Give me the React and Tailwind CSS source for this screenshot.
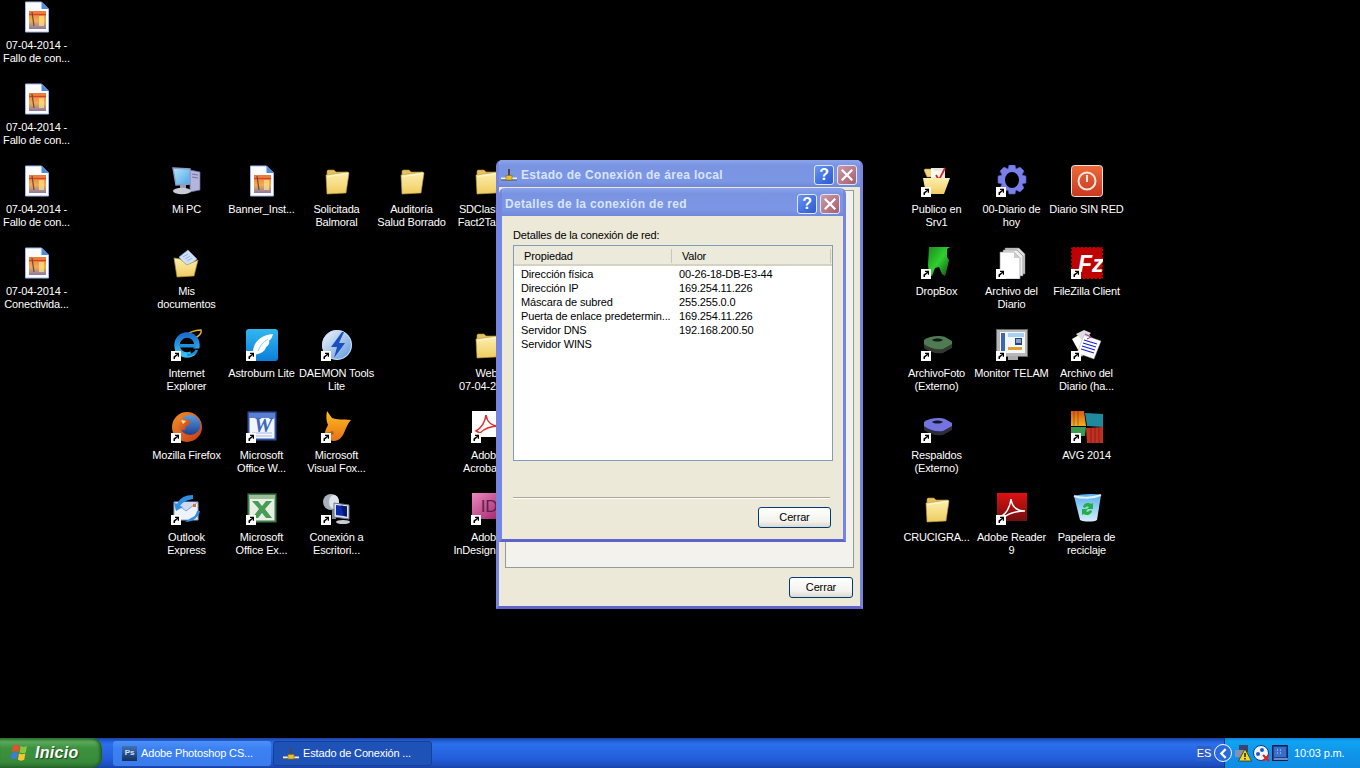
const tahoma = "font-['Liberation_Sans',Arial,sans-serif] tracking-[-0.15px]";

const Svg = ({ children }) => (
  <svg width="32" height="32" viewBox="0 0 32 32" className="block">
    {children}
  </svg>
);

const Shortcut = () => (
  <span className="absolute bottom-0 left-0 h-[10px] w-[10px] bg-white">
    <svg width="10" height="10" viewBox="0 0 10 10" className="block">
      <path d="M2.5 8V5.5L6 3H4V1.8h4v4H6.8V4L4 6.4V8z" fill="#000" />
    </svg>
  </span>
);

const ImageFile = () => (
  <Svg>
    <path d="M4.5 1h16l7 7v23h-23z" fill="#fdfdff" stroke="#9db8f0" />
    <path d="M20.5 1l7 7h-7z" fill="#4a8ae0" />
    <rect x="8" y="10" width="17" height="18" fill="url(#sunset)" />
    <path d="M8 13.500h17" stroke="#d8402a" strokeWidth="1.4" />
    <path d="M11 11l2 14" stroke="#6a4a3c" strokeWidth="1.2" />
    <path d="M18 15h5v10h-5z" fill="#f8e08a" opacity=".75" />
  </Svg>
);

const Folder = () => (
  <Svg>
    <path d="M6 8V6l1-1h6l2 2h11l1 1v3H6z" fill="#e6c05c" stroke="#b08f38" strokeWidth=".6" />
    <path d="M5 10l22-3 1 1-3 20-19 1z" fill="url(#folder)" stroke="#b89a48" strokeWidth=".6" />
    <path d="M6.500 11.500l19.500-2.800" stroke="#fff8d0" strokeWidth="1.200" />
  </Svg>
);

const MyPc = () => (
  <Svg>
    <path d="M19 5l10 2v18l-10 2z" fill="#b4b4dc" stroke="#6a6f96" strokeWidth=".7" />
    <path d="M21 9l6 1M21 12l6 1" stroke="#6f749c" />
    <path d="M2 3l17 1v15l-14 1z" fill="url(#screen)" stroke="#8e9ec9" strokeWidth="1.400" />
    <path d="M9 20h6v4H9z" fill="#9a9fb5" />
    <ellipse cx="11" cy="26" rx="9" ry="3.200" fill="#c9cbdb" />
  </Svg>
);

const MyDocs = () => (
  <Svg>
    <path d="M8 10l9-7 9 9-10 9z" fill="#cfe0fa" stroke="#7d9ad4" strokeWidth=".7" />
    <path d="M12 10l5-3M14 12l5-3M16 14l5-3" stroke="#8fb0e8" />
    <path d="M3 11l6 1 7 6 11-5-4 16L6 30z" fill="url(#folder)" stroke="#b08f38" strokeWidth=".7" />
  </Svg>
);

const Ie = () => (
  <Svg>
    <path d="M5 26C3 13 17 1 30 1c1 3-2 6-6 8" fill="none" stroke="#e0b030" strokeWidth="1.400" />
    <circle cx="16" cy="16" r="10" fill="none" stroke="url(#iee)" strokeWidth="5.500" />
    <path d="M9 15h16v3.500H9z" fill="#1f8fd8" />
    <path d="M19 19.500h10v4l-9 2z" fill="#000" />
    <path d="M16 26c4 0 8-1 10-5" fill="none" stroke="#1f8fd8" strokeWidth="2.600" />
  </Svg>
);

const Astroburn = () => (
  <Svg>
    <rect x="0" y="0" width="32" height="32" rx="3" fill="url(#astro)" />
    <path d="M7 26c-1-11 6-20 20-21-1 4-2 5-4 7 1 2-1 5-3 6-1 5-6 7-13 8z" fill="#fff" />
    <path d="M12 22c2-5 5-9 10-12" stroke="#7fd0f4" fill="none" />
  </Svg>
);

const Daemon = () => (
  <Svg>
    <circle cx="16" cy="16" r="15" fill="url(#daemon)" />
    <circle cx="16" cy="16" r="14.500" fill="none" stroke="#c8dcf6" />
    <path d="M21 3L10 18h6l-3 11 11-15h-6l5-11z" fill="#1b4fc0" />
  </Svg>
);

const Firefox = () => (
  <Svg>
    <circle cx="16" cy="16" r="15" fill="url(#fffox)" />
    <ellipse cx="19" cy="14" rx="10.500" ry="10" fill="url(#ffglobe)" />
    <path d="M8 5l5 3 5 1c2 3 0 6-3 6l-1 4c-3 1-6-1-7-4-1-4 0-7 1-10z" fill="url(#fffox)" />
    <path d="M10 9l5 1-3 3z" fill="#ffe1a0" />
  </Svg>
);

const Word = () => (
  <Svg>
    <rect x="2.500" y="1.500" width="27" height="27" fill="#f2f5fc" stroke="#2f4fa3" strokeWidth="2" />
    <rect x="3" y="2" width="26" height="5" fill="#5a7fd0" />
    <path d="M6 22h20M6 25h20" stroke="#a9b9de" />
    <text x="17" y="21" textAnchor="middle" fontFamily="Liberation Serif" fontWeight="700" fontStyle="italic" fontSize="21" fill="#3f67bd">W</text>
  </Svg>
);

const Fox = () => (
  <Svg>
    <path d="M6 0l5 7c5 2 11 1 19 2-3 3-5 8-7 13-2 4-5 8-10 8-6 0-9-4-9-8 0-3 2-6 3-8-2-4-2-9-1-14z" fill="url(#fox)" />
    <path d="M5 22l7-2 1 3-5 2z" fill="#a06818" />
  </Svg>
);

const Outlook = () => (
  <Svg>
    <path d="M3 9h24v18H3z" fill="#eef2fb" stroke="#8da0cf" />
    <path d="M3 9l12 9 12-9" fill="#cddaf3" stroke="#8da0cf" />
    <rect x="22" y="11" width="3" height="3" fill="#d87040" />
    <path d="M22 2C14 2 9 5 6 11l-3-1 2 8 7-4-3-1c3-4 7-6 13-7z" fill="#2f8fe4" />
    <path d="M29 18c-1 6-7 11-15 11l6-4c3-1 5-3 6-7z" fill="#2f8fe4" />
  </Svg>
);

const Excel = () => (
  <Svg>
    <rect x="2.500" y="1.500" width="27" height="27" fill="#e8f0e4" stroke="#3d7a48" strokeWidth="2" />
    <rect x="3" y="2" width="26" height="4" fill="#9abf98" />
    <path d="M6 8h6l4 5 4-5h6l-7 8 7 9h-6l-4-5-4 5H6l7-9z" fill="#4a9a58" />
  </Svg>
);

const Rdp = () => (
  <Svg>
    <ellipse cx="10" cy="9" rx="8" ry="8" fill="#a9b2bc" />
    <ellipse cx="13" cy="9" rx="5" ry="7" fill="#dfe5ea" />
    <path d="M11 16h4v10h-4z" fill="#7c8690" />
    <path d="M13 10l15 2v14l-15-2z" fill="#dfe3ea" stroke="#6d7786" />
    <path d="M15 12l11 1.500v10L15 22z" fill="#0a2bb0" />
    <path d="M20 12.500l6 1v10l-3-.5z" fill="#061868" />
    <ellipse cx="22" cy="29" rx="7" ry="2" fill="#c9ced6" />
  </Svg>
);

const Acrobat = () => (
  <Svg>
    <rect x="1" y="0" width="30" height="26" fill="#fff" />
    <path d="M5 20c5-3 9-9 10-16 1 7 6 11 13 11-7 0-14 2-19 7z" fill="none" stroke="#e03030" strokeWidth="1.600" />
  </Svg>
);

const InDesign = () => (
  <Svg>
    <rect x="1" y="0" width="30" height="26" fill="url(#indesign)" />
    <text x="18" y="19" textAnchor="middle" fontFamily="Liberation Sans" fontSize="17" fill="#5b2048">ID</text>
  </Svg>
);

const PublicFolder = () => (
  <Svg>
    <path d="M3 5l1-1h8l2 2h8v6H6z" fill="#f3d684" stroke="#b08f38" strokeWidth=".6" />
    <path d="M10 3h14v14H10z" fill="#fff" opacity=".9" />
    <path d="M15 10l3 5 6-12" fill="none" stroke="#d02828" strokeWidth="1.800" />
    <path d="M2 13h27l-6 16H5z" fill="url(#folder)" />
  </Svg>
);

const Gear = () => (
  <Svg>
    <path
      d="M13 0h6l1 4 4-2 4 4-2 4 4 1v7l-4 1 2 4-4 4-4-2-1 4h-6l-1-4-4 2-4-4 2-4-4-1v-7l4-1-2-4 4-4 4 2z"
      fill="#7a80ea"
      stroke="#5359c4"
      strokeWidth=".6"
    />
    <ellipse cx="16" cy="15" rx="7" ry="8" fill="#000" />
  </Svg>
);

const Power = () => (
  <Svg>
    <rect x=".5" y=".5" width="31" height="31" rx="3" fill="url(#power)" stroke="#e8e0dc" />
    <circle cx="16" cy="16" r="8.500" fill="none" stroke="#f8e8e0" strokeWidth="2" />
    <path d="M16 10v7" stroke="#f8e8e0" strokeWidth="2" />
  </Svg>
);

const Dropbox = () => (
  <Svg>
    <path d="M8 0h21l-3 2v8l2 3-2 9-2 7-3-2-3-7-4 1-3 8-3-2-1-9z" fill="url(#dropbox)" />
  </Svg>
);

const DocStack = () => (
  <Svg>
    <path d="M9 1h14l6 6v20H9z" fill="#ddd" stroke="#666" strokeWidth=".6" />
    <path d="M7 3h14l6 6v20H7z" fill="#eee" stroke="#666" strokeWidth=".6" />
    <path d="M4 5h14l6 6v21H4z" fill="#fff" stroke="#888" strokeWidth=".6" />
    <path d="M18 5v6h6z" fill="#ccc" />
  </Svg>
);

const FileZilla = () => (
  <Svg>
    <rect x="0" y="0" width="32" height="32" fill="#bf0000" />
    <path d="M0 0h32v32H0z" fill="none" stroke="#000" strokeWidth="1.200" strokeDasharray="2 2" />
    <text x="7" y="25" fontFamily="Liberation Sans" fontWeight="700" fontStyle="italic" fontSize="23" fill="#fff">Fz</text>
  </Svg>
);

const Disk = ({ body, top }) => (
  <Svg>
    <path d="M3 11c5-4 15-5 21-3l7 4v4l-9 5c-7 1-14-1-19-5z" fill={top} />
    <path d="M3 15c5 4 12 6 19 5l9-5v4l-9 5c-7 1-14-1-19-5z" fill={body} />
    <path d="M11 11c3-2 8-2 11 0-3 2-8 2-11 0z" fill="#14181a" />
  </Svg>
);

const MonitorTelam = () => (
  <Svg>
    <rect x=".5" y=".5" width="31" height="27" fill="#b8b8b8" stroke="#666" />
    <rect x="4" y="3" width="25" height="21" fill="#f4f8fc" />
    <rect x="5" y="4" width="4" height="19" fill="#3d66b8" />
    <path d="M12 4h16v4H12z" fill="#a8d0f0" />
    <path d="M19 9h7v7h-7z" fill="#204488" />
    <path d="M20 11h5M20 13h5" stroke="#fff" />
    <path d="M12 18h14v3H12z" fill="#e0a030" />
    <rect x="12" y="27" width="10" height="4" fill="#aaa" />
  </Svg>
);

const Papers = () => (
  <Svg>
    <path d="M1 10L15 2l5 6-9 20z" fill="#fff" />
    <path d="M5 5l8-4 7 3-8 8z" fill="#ddd" />
    <path d="M13 6l17 6-7 18-17-6z" fill="#fff" stroke="#999" strokeWidth=".4" />
    <path d="M13 11l13 4M12 14l13 4M11 17l13 4M10 20l13 4" stroke="#1420d8" strokeWidth="1.100" />
    <path d="M14 5l6 3-4 2" fill="none" stroke="#a020a0" />
  </Svg>
);

const Avg = () => (
  <Svg>
    <path d="M0 0h13l2 15H0z" fill="url(#avgorange)" />
    <path d="M14 2l18 1v13l-16-1z" fill="#1f8a9e" />
    <path d="M0 16h15l-1 9H0z" fill="#3a9a50" />
    <path d="M15 17l17-1v16H16z" fill="#c23020" />
    <path d="M3 0v15M7 0v15M20 16v16M24 16v16M28 16v16" stroke="#000" strokeOpacity=".3" />
  </Svg>
);

const Reader = () => (
  <Svg>
    <rect x="1" y="0" width="30" height="28" fill="url(#reader)" />
    <path d="M4 24c6-3 10-10 11-18 1 8 6 12 14 12-8 0-16 2-22 7" fill="none" stroke="#fff" strokeWidth="1.500" />
  </Svg>
);

const Recycle = () => (
  <Svg>
    <path d="M3 3c7-2 19-3 27-1l-4 25c-3 2-13 2-17 0z" fill="url(#bin)" />
    <path d="M3 3c8 3 19 2 27-1" fill="none" stroke="#dff0fb" strokeWidth="2" />
    <path d="M12 14a5 5 0 0 1 8-3l2-1v6h-6l2-2a2.500 2.500 0 0 0-4 1zM21 18a5 5 0 0 1-8 3l-2 1v-6h6l-2 2a2.500 2.500 0 0 0 4-1z" fill="#22b040" />
  </Svg>
);

const NetIcon = () => (
  <svg width="16" height="16" viewBox="0 0 16 16" className="block shrink-0">
    <path d="M8 2v7" stroke="#4a4a4a" strokeWidth="2" />
    <path d="M0 11.500h16" stroke="#efefef" strokeWidth="2" />
    <path d="M0 13h16" stroke="#555" />
    <rect x="5" y="8.500" width="6" height="4.500" fill="#e8c030" stroke="#8a6a10" strokeWidth=".6" />
  </svg>
);

const FlagLogo = () => (
  <svg width="19" height="19" viewBox="0 0 18 17" className="block shrink-0">
    <path d="M3 1c2-1 3-1 6 0l-1 6c-3-1-4-1-6 0z" fill="#e8502a" />
    <path d="M10 1.500c2 1 4 1 6 0l-1 6c-2 1-4 1-6 0z" fill="#8cc63f" />
    <path d="M2 8c2-1 3-1 5.500 0l-1 6c-3-1-4-1-6 0z" fill="#3a7ce0" />
    <path d="M8.500 8.500c2 1 4 1 6 0l-1 6c-2 1-4 1-6 0z" fill="#f6c82c" />
  </svg>
);

// column and row count on a 75 x 82 desktop grid
const icons = [
  { c: 1, r: 1, Icon: ImageFile, lines: ["07-04-2014 -", "Fallo de con..."] },
  { c: 1, r: 2, Icon: ImageFile, lines: ["07-04-2014 -", "Fallo de con..."] },
  { c: 1, r: 3, Icon: ImageFile, lines: ["07-04-2014 -", "Fallo de con..."] },
  { c: 1, r: 4, Icon: ImageFile, lines: ["07-04-2014 -", "Conectivida..."] },
  { c: 3, r: 3, Icon: MyPc, lines: ["Mi PC"] },
  { c: 4, r: 3, Icon: ImageFile, lines: ["Banner_Inst..."] },
  { c: 5, r: 3, Icon: Folder, lines: ["Solicitada", "Balmoral"] },
  { c: 6, r: 3, Icon: Folder, lines: ["Auditoría", "Salud Borrado"] },
  { c: 7, r: 3, Icon: Folder, lines: ["SDClasifica", "Fact2Tablas"] },
  { c: 3, r: 4, Icon: MyDocs, lines: ["Mis", "documentos"] },
  { c: 3, r: 5, Icon: Ie, link: true, lines: ["Internet", "Explorer"] },
  { c: 4, r: 5, Icon: Astroburn, link: true, lines: ["Astroburn Lite"] },
  { c: 5, r: 5, Icon: Daemon, link: true, lines: ["DAEMON Tools", "Lite"] },
  { c: 7, r: 5, Icon: Folder, lines: ["Web", "07-04-2014"] },
  { c: 3, r: 6, Icon: Firefox, link: true, lines: ["Mozilla Firefox"] },
  { c: 4, r: 6, Icon: Word, link: true, lines: ["Microsoft", "Office W..."] },
  { c: 5, r: 6, Icon: Fox, link: true, lines: ["Microsoft", "Visual Fox..."] },
  { c: 7, r: 6, Icon: Acrobat, link: true, lines: ["Adobe", "Acrobat X"] },
  { c: 3, r: 7, Icon: Outlook, link: true, lines: ["Outlook", "Express"] },
  { c: 4, r: 7, Icon: Excel, link: true, lines: ["Microsoft", "Office Ex..."] },
  { c: 5, r: 7, Icon: Rdp, link: true, lines: ["Conexión a", "Escritori..."] },
  { c: 7, r: 7, Icon: InDesign, link: true, lines: ["Adobe", "InDesign CS5"] },
  { c: 13, r: 3, Icon: PublicFolder, link: true, lines: ["Publico en", "Srv1"] },
  { c: 14, r: 3, Icon: Gear, link: true, lines: ["00-Diario de", "hoy"] },
  { c: 15, r: 3, Icon: Power, lines: ["Diario SIN RED"] },
  { c: 13, r: 4, Icon: Dropbox, link: true, lines: ["DropBox"] },
  { c: 14, r: 4, Icon: DocStack, link: true, lines: ["Archivo del", "Diario"] },
  { c: 15, r: 4, Icon: FileZilla, link: true, lines: ["FileZilla Client"] },
  { c: 13, r: 5, Icon: () => <Disk body="#30382f" top="#4f7a52" />, link: true, lines: ["ArchivoFoto", "(Externo)"] },
  { c: 14, r: 5, Icon: MonitorTelam, link: true, lines: ["Monitor TELAM"] },
  { c: 15, r: 5, Icon: Papers, link: true, lines: ["Archivo del", "Diario (ha..."] },
  { c: 13, r: 6, Icon: () => <Disk body="#2c2c3a" top="#7474e0" />, link: true, lines: ["Respaldos", "(Externo)"] },
  { c: 15, r: 6, Icon: Avg, link: true, lines: ["AVG 2014"] },
  { c: 13, r: 7, Icon: Folder, lines: ["CRUCIGRA..."] },
  { c: 14, r: 7, Icon: Reader, link: true, lines: ["Adobe Reader", "9"] },
  { c: 15, r: 7, Icon: Recycle, lines: ["Papelera de", "reciclaje"] },
];

const DesktopIcon = ({ c, r, Icon, link, lines }) => (
  <div className="flex flex-col items-center" style={{ gridColumn: c, gridRow: r }}>
    <div className="relative h-8 w-8">
      <Icon />
      {link && <Shortcut />}
    </div>
    <div className="mt-[6px] whitespace-nowrap text-center text-[11px] leading-[13px] text-white">
      {lines.map((line, i) => (
        <div key={i}>{line}</div>
      ))}
    </div>
  </div>
);

const TitleButtons = () => (
  <div className="flex gap-[3px]">
    <div className="flex h-[20px] w-[20px] items-center justify-center rounded-[3px] border border-[#dfe6f8] bg-[linear-gradient(135deg,#6f97ee,#3f6fe0_60%,#2f5cd0)] text-[16px] font-bold text-white">
      ?
    </div>
    <div className="flex h-[20px] w-[20px] items-center justify-center rounded-[3px] border border-[#dfe6f8] bg-[linear-gradient(135deg,#c99aa8,#b3707f_70%,#a06070)]">
      <svg width="12" height="12" viewBox="0 0 12 12">
        <path d="M1.500 1.500l9 9M10.500 1.500l-9 9" stroke="#fff" strokeWidth="2.200" strokeLinecap="square" />
      </svg>
    </div>
  </div>
);

const CloseButton = ({ className }) => (
  <div
    className={`flex h-[21px] items-center justify-center rounded-[3px] border border-[#003c74] bg-[linear-gradient(180deg,#ffffff,#f3f2ec_70%,#dcd8ce)] text-[11px] text-black ${className}`}
  >
    Cerrar
  </div>
);

const rows = [
  ["Dirección física", "00-26-18-DB-E3-44"],
  ["Dirección IP", "169.254.11.226"],
  ["Máscara de subred", "255.255.0.0"],
  ["Puerta de enlace predetermin...", "169.254.11.226"],
  ["Servidor DNS", "192.168.200.50"],
  ["Servidor WINS", ""],
];

const titleBar =
  "flex items-center justify-between bg-[linear-gradient(180deg,#8ba3ec,#7a94e2_20%,#7b96e4_80%,#6f88d8)]";
const titleText = "text-[12px] font-bold tracking-[.33px] text-[#d8e4f8]";

const StatusWindow = () => (
  <div className="absolute left-[496px] top-[160px] flex h-[449px] w-[367px] flex-col overflow-hidden rounded-t-[6px] border-x-[3px] border-b-[3px] border-x-[#7685e0] border-b-[#5f64cc] bg-[#ece9d8]">
    <div className={`${titleBar} h-[27px] shrink-0 pl-[2px] pr-[3px] pt-[3px]`}>
      <div className="flex items-center gap-[4px]">
        <NetIcon />
        <span className={titleText}>Estado de Conexión de área local</span>
      </div>
      <TitleButtons />
    </div>
    <div className="mx-[6px] mt-[3px] h-[378px] border border-[#919b9c] bg-[#f4f2ec]" />
    <div className="mt-[9px] flex justify-end pr-[7px]">
      <CloseButton className="w-[64px]" />
    </div>
  </div>
);

const DetailsWindow = () => (
  <div className="absolute left-[499px] top-[188px] flex h-[354px] w-[347px] flex-col overflow-hidden rounded-t-[6px] border-x-[3px] border-b-[3px] border-x-[#7685e0] border-b-[#5f64cc] bg-[#ece9d8]">
    <div className={`${titleBar} h-[28px] shrink-0 pl-[3px] pr-[3px] pt-[3px]`}>
      <span className={titleText}>Detalles de la conexión de red</span>
      <TitleButtons />
    </div>
    <div className="flex flex-1 flex-col px-[11px] text-[11px] text-black">
      <div className="mt-[13px] h-[13px] leading-[13px]">Detalles de la conexión de red:</div>
      <div className="mt-[3px] h-[216px] w-[320px] border border-[#7f9db9] bg-white">
        <div className="flex h-[20px] items-center bg-[#ebeadb] shadow-[inset_0_-2px_0_#d6d2c2]">
          <div className="ml-[2px] w-[156px] border-r border-[#c9c7ba] pl-[8px] leading-[14px]">Propiedad</div>
          <div className="w-[159px] border-r border-[#c9c7ba] pl-[10px] leading-[14px]">Valor</div>
        </div>
        <div className="pt-[1px]">
          {rows.map(([name, value]) => (
            <div key={name} className="flex h-[14px] items-center leading-[14px]">
              <div className="w-[158px] whitespace-nowrap pl-[7px]">{name}</div>
              <div className="whitespace-nowrap pl-[7px]">{value}</div>
            </div>
          ))}
        </div>
      </div>
      <div className="mt-[36px] h-[2px] w-[317px] border-y border-t-[#aca899] border-b-white" />
      <div className="mt-[8px] flex w-[318px] justify-end">
        <CloseButton className="w-[73px]" />
      </div>
    </div>
  </div>
);

const TrayWarning = () => (
  <svg width="17" height="17" viewBox="0 0 17 17" className="block shrink-0">
    <rect x="4" y="0" width="9" height="7" fill="#3a4470" />
    <rect x="0" y="5" width="9" height="7" fill="#8890b0" />
    <path d="M10 4l6.500 12H3.500z" fill="#f8d820" stroke="#222" strokeWidth=".7" />
    <path d="M10 8v4M10 13v1.500" stroke="#111" strokeWidth="1.400" />
  </svg>
);

const TrayDisconnected = () => (
  <svg width="17" height="17" viewBox="0 0 17 17" className="block shrink-0">
    <circle cx="8" cy="8" r="7.500" fill="#eef4fb" stroke="#123a80" />
    <circle cx="5" cy="9" r="2" fill="#1c5cc0" />
    <circle cx="9" cy="5" r="2" fill="#1c5cc0" />
    <path d="M10 10l6 6M16 10l-6 6" stroke="#d82020" strokeWidth="2" />
  </svg>
);

const TrayBlue = () => (
  <svg width="17" height="17" viewBox="0 0 17 17" className="block shrink-0">
    <rect x=".5" y=".5" width="15" height="15" fill="#1c3f90" stroke="#0a1f50" />
    <rect x="2" y="2" width="12" height="10" fill="#3a6ec8" />
    <path d="M5 5h1M8 5h1M5 8h1M8 8h1" stroke="#cfe0fa" />
    <path d="M2 14h14" stroke="#c8d8f4" />
  </svg>
);

const Taskbar = () => (
  <div className="flex h-[30px] shrink-0 items-stretch bg-[linear-gradient(180deg,#1f3f9c_0,#1f5fd8_3px,#2a70ea_6px,#245edb_20px,#1c4fc0_27px,#1941a5_100%)] text-[11px] text-white">
    <div className="flex w-[102px] shrink-0 items-center gap-[6px] rounded-r-[10px] bg-[linear-gradient(180deg,#2f7a34_0,#5aa85a_4px,#3c923e_10px,#388a3a_24px,#2a6a2e_100%)] pl-[10px] shadow-[inset_-2px_0_3px_#1f5a24]">
      <FlagLogo />
      <span className="text-[16px] font-bold italic tracking-[.3px] text-white [text-shadow:1px_1px_1px_#1a4a1e]">Inicio</span>
    </div>
    <div className="ml-[11px] flex h-[25px] w-[158px] items-center self-center rounded-[3px] bg-[linear-gradient(180deg,#4c90f6,#3c81f3_30%,#3a7cec)] pl-[9px]">
      <span className="flex h-[15px] w-[15px] shrink-0 items-center justify-center bg-[linear-gradient(180deg,#3f72b8,#12305e)] text-[8px] font-bold text-[#cfe0fa]">Ps</span>
      <span className="ml-[4px] whitespace-nowrap">Adobe Photoshop CS...</span>
    </div>
    <div className="ml-[2px] flex h-[25px] w-[159px] items-center self-center rounded-[3px] border border-[#173f98] bg-[#1e52b7] pl-[9px] pt-[1px]">
      <NetIcon />
      <span className="ml-[4px] whitespace-nowrap">Estado de Conexión ...</span>
    </div>
    <div className="flex-1" />
    <div className="relative z-10 flex items-center">
      <span className="flex h-[15px] w-[14px] items-center justify-center bg-[#2f5fc4] text-[11px]">ES</span>
      <span className="-mr-[8px] ml-[3px] flex h-[18px] w-[18px] items-center justify-center rounded-full border border-white bg-[#2a6ae0]">
        <svg width="9" height="11" viewBox="0 0 8 10">
          <path d="M6 1L2 5l4 4" fill="none" stroke="#fff" strokeWidth="2" />
        </svg>
      </span>
    </div>
    <div className="flex w-[136px] items-center border-l border-[#0f3a80] bg-[linear-gradient(180deg,#0c7fe0_0,#10a4f2_3px,#0f95ea_50%,#0f8ce2_100%)] pl-[10px]">
      <TrayWarning />
      <span className="ml-[1px]">
        <TrayDisconnected />
      </span>
      <span className="ml-[2px]">
        <TrayBlue />
      </span>
      <span className="ml-[5px] whitespace-nowrap">10:03 p.m.</span>
    </div>
  </div>
);

const GradientDefs = () => (
  <svg width="0" height="0" className="absolute">
    <defs>
      <linearGradient id="sunset" x1="0" y1="0" x2="0" y2="1">
        <stop offset="0" stopColor="#e87a3a" />
        <stop offset=".55" stopColor="#f4ac50" />
        <stop offset="1" stopColor="#8a7aa8" />
      </linearGradient>
      <linearGradient id="folder" x1="0" y1="0" x2="0" y2="1">
        <stop offset="0" stopColor="#fdf0b0" />
        <stop offset="1" stopColor="#f0cc60" />
      </linearGradient>
      <linearGradient id="screen" x1="0" y1="0" x2="1" y2="1">
        <stop offset="0" stopColor="#b8e4fa" />
        <stop offset="1" stopColor="#4aa8ea" />
      </linearGradient>
      <linearGradient id="iee" x1="0" y1="0" x2="0" y2="1">
        <stop offset="0" stopColor="#1a6fd0" />
        <stop offset="1" stopColor="#38c0f0" />
      </linearGradient>
      <linearGradient id="astro" x1="0" y1="0" x2="0" y2="1">
        <stop offset="0" stopColor="#30b8f0" />
        <stop offset="1" stopColor="#0c7fd8" />
      </linearGradient>
      <linearGradient id="daemon" x1="0" y1="0" x2="1" y2="1">
        <stop offset="0" stopColor="#f4f8fd" />
        <stop offset="1" stopColor="#5a94dc" />
      </linearGradient>
      <linearGradient id="ffglobe" x1="0" y1="0" x2="0" y2="1">
        <stop offset="0" stopColor="#5a9ce0" />
        <stop offset="1" stopColor="#1c3f90" />
      </linearGradient>
      <linearGradient id="fffox" x1="0" y1="0" x2="1" y2="1">
        <stop offset="0" stopColor="#f09028" />
        <stop offset="1" stopColor="#c83818" />
      </linearGradient>
      <linearGradient id="fox" x1="0" y1="0" x2="0" y2="1">
        <stop offset="0" stopColor="#fbc020" />
        <stop offset="1" stopColor="#e8701c" />
      </linearGradient>
      <linearGradient id="indesign" x1="0" y1="0" x2="1" y2="1">
        <stop offset="0" stopColor="#ec8ac0" />
        <stop offset="1" stopColor="#a02068" />
      </linearGradient>
      <linearGradient id="power" x1="0" y1="0" x2="0" y2="1">
        <stop offset="0" stopColor="#ee6a3a" />
        <stop offset="1" stopColor="#c83820" />
      </linearGradient>
      <linearGradient id="dropbox" x1="0" y1="0" x2="1" y2="1">
        <stop offset="0" stopColor="#1a8a1a" />
        <stop offset=".5" stopColor="#30d030" />
        <stop offset="1" stopColor="#0c4a0c" />
      </linearGradient>
      <linearGradient id="avgorange" x1="0" y1="0" x2="0" y2="1">
        <stop offset="0" stopColor="#e05818" />
        <stop offset="1" stopColor="#f0b020" />
      </linearGradient>
      <linearGradient id="reader" x1="0" y1="0" x2="0" y2="1">
        <stop offset="0" stopColor="#e01010" />
        <stop offset="1" stopColor="#701010" />
      </linearGradient>
      <linearGradient id="bin" x1="0" y1="0" x2="0" y2="1">
        <stop offset="0" stopColor="#58b0ec" />
        <stop offset="1" stopColor="#d4eefa" />
      </linearGradient>
    </defs>
  </svg>
);

const App = () => (
  <div className={`relative flex h-[768px] w-[1360px] flex-col overflow-hidden bg-black ${tahoma}`}>
    <GradientDefs />
    <div className="-ml-px grid h-[738px] shrink-0 grid-cols-[repeat(15,75px)] grid-rows-[repeat(7,82px)] content-start pt-px">
      {icons.map((icon, i) => (
        <DesktopIcon key={i} {...icon} />
      ))}
    </div>
    <StatusWindow />
    <DetailsWindow />
    <Taskbar />
  </div>
);

export default App;
